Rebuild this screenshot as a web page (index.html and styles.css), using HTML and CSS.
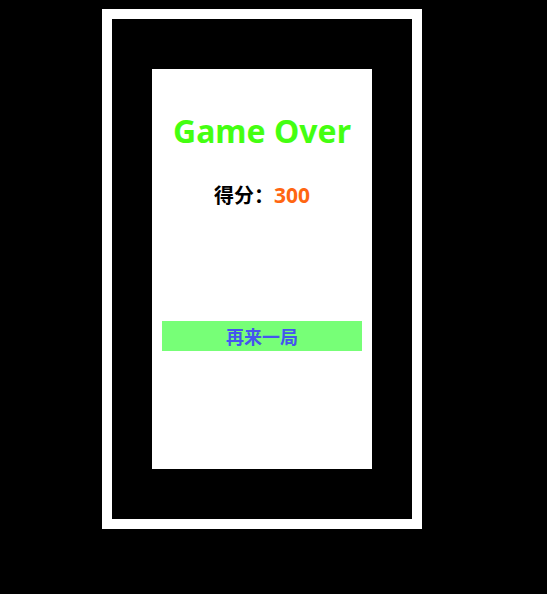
FILE: index.html
```html
<!DOCTYPE html>
<html>
<head>
<meta charset="utf-8">
<link rel="stylesheet" href="styles.css">
</head>
<body>
<div class="frame">
  <div class="screen">
    <div class="panel">
      <h1 class="title">Game Over</h1>
      <div class="score">得分：<span class="num">300</span></div>
      <button class="again">再来一局</button>
    </div>
  </div>
</div>
</body>
</html>
```
FILE: styles.css
```css
html, body {
  margin: 0;
  padding: 0;
  background: #000;
}
body {
  padding: 9px 0 0 102px;
  font-family: "Noto Sans", "Noto Sans CJK SC", sans-serif;
}
.frame {
  width: 300px;
  height: 500px;
  border: 10px solid #fff;
  background: #000;
}
.screen {
  padding: 50px 40px;
}
.panel {
  width: 220px;
  height: 400px;
  background: #fff;
  display: flex;
  flex-direction: column;
  align-items: center;
}
.title {
  margin: 42px 0 0;
  font-size: 32px;
  line-height: 40px;
  font-weight: bold;
  color: #44ff11;
}
.score {
  margin-top: 30px;
  font-family: "Noto Sans CJK SC", sans-serif;
  font-size: 20px;
  line-height: 28px;
  font-weight: bold;
  color: #000;
}
.num {
  color: #ff6611;
  font-family: "Noto Sans", sans-serif;
  font-size: 21px;
}
.again {
  margin-top: 112px;
  width: 200px;
  height: 30px;
  border: none;
  padding: 0;
  background: #77ff77;
  color: #4455ee;
  font-family: "Noto Sans CJK SC", sans-serif;
  font-size: 18px;
  font-weight: bold;
}
```
